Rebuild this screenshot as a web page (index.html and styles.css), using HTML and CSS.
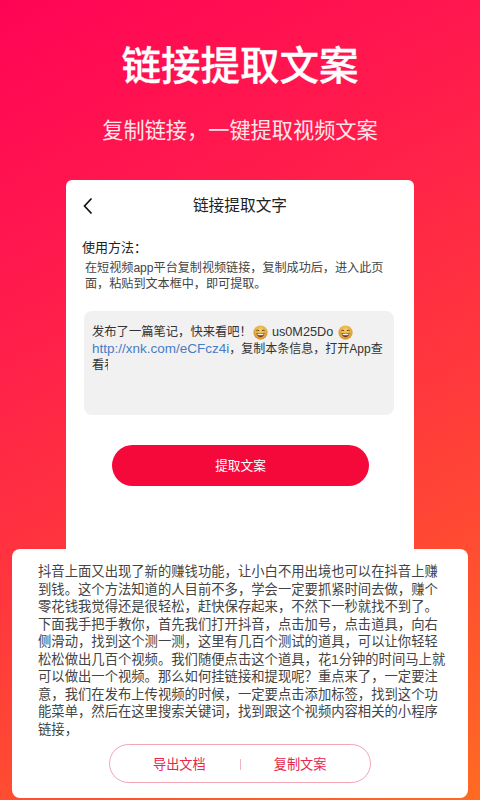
FILE: index.html
```html
<!DOCTYPE html>
<html lang="zh">
<head>
<meta charset="utf-8">
<title>链接提取文案</title>
<link rel="stylesheet" href="styles.css">
</head>
<body>
<main class="screen">
  <h1 class="title">链接提取文案</h1>
  <p class="subtitle">复制链接，一键提取视频文案</p>
  <section class="card">
    <header class="card-head">
      <svg class="back" viewBox="0 0 12 18" width="12" height="18"><path d="M9.5 1.5 L2.5 9 L9.5 16.5" fill="none" stroke="#111" stroke-width="1.7"/></svg>
      <h2 class="card-title">链接提取文字</h2>
    </header>
    <h3 class="usage-title">使用方法：</h3>
    <p class="usage">在短视频app平台复制视频链接，复制成功后，进入此页<br>面，粘贴到文本框中，即可提取。</p>
    <div class="paste">
      <div class="paste-line">发布了一篇笔记，快来看吧！<svg class="emoji first" viewBox="0 0 16 16"><use href="#grin"/></svg><span class="code">us0M25Do</span><svg class="emoji" viewBox="0 0 16 16"><use href="#grin"/></svg></div>
      <div class="paste-line"><span class="link">http://xnk.com/eCFcz4i</span><span class="tail">，复制本条信息，打开App查</span></div>
      <div class="paste-line"><span class="clip">看看</span></div>
    </div>
    <button class="extract">提取文案</button>
  </section>
  <section class="result">
    <div class="result-text">
      <span>抖音上面又出现了新的赚钱功能，让小白不用出境也可以在抖音上赚</span>
      <span>到钱。这个方法知道的人目前不多，学会一定要抓紧时间去做，赚个</span>
      <span>零花钱我觉得还是很轻松，赶快保存起来，不然下一秒就找不到了。</span>
      <span>下面我手把手教你，首先我们打开抖音，点击加号，点击道具，向右</span>
      <span>侧滑动，找到这个测一测，这里有几百个测试的道具，可以让你轻轻</span>
      <span>松松做出几百个视频。我们随便点击这个道具，花1分钟的时间马上就</span>
      <span>可以做出一个视频。那么如何挂链接和提现呢？重点来了，一定要注</span>
      <span>意，我们在发布上传视频的时候，一定要点击添加标签，找到这个功</span>
      <span>能菜单，然后在这里搜索关键词，找到跟这个视频内容相关的小程序</span>
      <span>链接，</span>
    </div>
    <div class="actions">
      <button class="action">导出文档</button>
      <i class="divider"></i>
      <button class="action">复制文案</button>
    </div>
  </section>
</main>
<svg class="defs" width="0" height="0">
  <defs>
    <radialGradient id="face" cx="50%" cy="35%" r="65%"><stop offset="0" stop-color="#f7d468"/><stop offset="1" stop-color="#d98f2c"/></radialGradient>
    <symbol id="grin" viewBox="0 0 16 16">
      <circle cx="8" cy="8" r="7.6" fill="url(#face)"/>
      <path d="M3.6 6.2 Q5 4.8 6.6 6.2 M9.4 6.2 Q11 4.8 12.4 6.2" fill="none" stroke="#5a3a1a" stroke-width="1"/>
      <path d="M3.6 8.6 Q8 10 12.4 8.6 Q11.6 13 8 13 Q4.4 13 3.6 8.6Z" fill="#6a3a20"/>
      <path d="M4.6 9.2 Q8 10.2 11.4 9.2 L11 10.6 Q8 11.4 5 10.6Z" fill="#f5efe4"/>
    </symbol>
  </defs>
</svg>
</body>
</html>
```

FILE: styles.css
```css
* { box-sizing: border-box; }
html, body { margin: 0; padding: 0; }
body {
  width: 480px;
  height: 800px;
  overflow: hidden;
  font-family: "Liberation Sans", "Noto Sans CJK SC", sans-serif;
}
.screen {
  width: 480px;
  height: 800px;
  padding-top: 42px;
  display: flex;
  flex-direction: column;
  align-items: center;
  background: linear-gradient(152deg, #ff0456 0%, #ff1c4c 30%, #ff3c3a 62%, #ff6a22 100%);
}
.title {
  margin: 0;
  height: 48px;
  line-height: 48px;
  font-size: 39.5px;
  font-weight: 500;
  -webkit-text-stroke: 0.3px #fff;
  color: #fff;
  white-space: nowrap;
}
.subtitle {
  margin: 27px 0 0;
  height: 28px;
  line-height: 28px;
  font-size: 21.2px;
  font-weight: 400;
  color: #ffe6ea;
  white-space: nowrap;
}
.card {
  flex: none;
  margin-top: 35px;
  width: 348px;
  height: 370px;
  padding: 0 20px 0 16px;
  background: #fff;
  border-radius: 6px 6px 0 0;
}
.card-head {
  position: relative;
  height: 52px;
  display: flex;
  align-items: center;
  justify-content: center;
}
.back { position: absolute; left: 0; top: 17px; }
.card-title {
  margin: 0 0 0 4px;
  font-size: 15.7px;
  font-weight: 400;
  color: #222;
  line-height: 52px;
}
.usage-title {
  margin: 6px 0 0;
  font-size: 13px;
  font-weight: 400;
  line-height: 20px;
  color: #222;
}
.usage {
  margin: 2px 0 0 3px;
  font-size: 12.1px;
  line-height: 16px;
  color: #444;
  white-space: nowrap;
}
.paste {
  margin: 19px 0 0 2px;
  height: 104px;
  padding: 13px 8px 0;
  background: #f1f1f1;
  border-radius: 8px;
  font-size: 12.3px;
  line-height: 16.6px;
  color: #333;
}
.paste-line { display: flex; align-items: center; white-space: nowrap; height: 16.6px; }
.link { color: #4a7cc4; font-size: 13.5px; }
.tail { font-size: 12px; }
.code { font-size: 12.7px; }
.clip { display: inline-block; width: 15.5px; overflow: hidden; }
.emoji { width: 15px; height: 15px; margin: 0 4px 0 5px; flex: none; }
.emoji.first { margin-left: 1px; }
.extract {
  display: block;
  margin: 30px 0 0 30px;
  width: 257px;
  height: 41px;
  border: 0;
  border-radius: 21px;
  background: #f5083a;
  color: #fff;
  font: 400 12.7px/41px "Liberation Sans", "Noto Sans CJK SC", sans-serif;
}
.result {
  flex: none;
  margin-top: -1px;
  width: 456px;
  height: 249px;
  padding: 14px 0 0 26px;
  background: #fff;
  border-radius: 8px;
}
.result-text {
  font-size: 13.33px;
  line-height: 17.5px;
  color: #444;
}
.result-text span { display: block; white-space: nowrap; }
.actions {
  margin: 6px 0 0 71px;
  width: 262px;
  height: 39px;
  display: flex;
  align-items: center;
  border: 1px solid #f3a5b4;
  border-radius: 20px;
  padding: 2px 0 0 43px;
}
.action {
  flex: none;
  padding: 0;
  border: 0;
  background: none;
  color: #e8264c;
  font: 400 13.2px/20px "Liberation Sans", "Noto Sans CJK SC", sans-serif;
}
.divider {
  flex: none;
  width: 1px;
  height: 11px;
  margin: 0 33px 0 34px;
  background: #f3b5c0;
}
.defs { position: absolute; }
```
